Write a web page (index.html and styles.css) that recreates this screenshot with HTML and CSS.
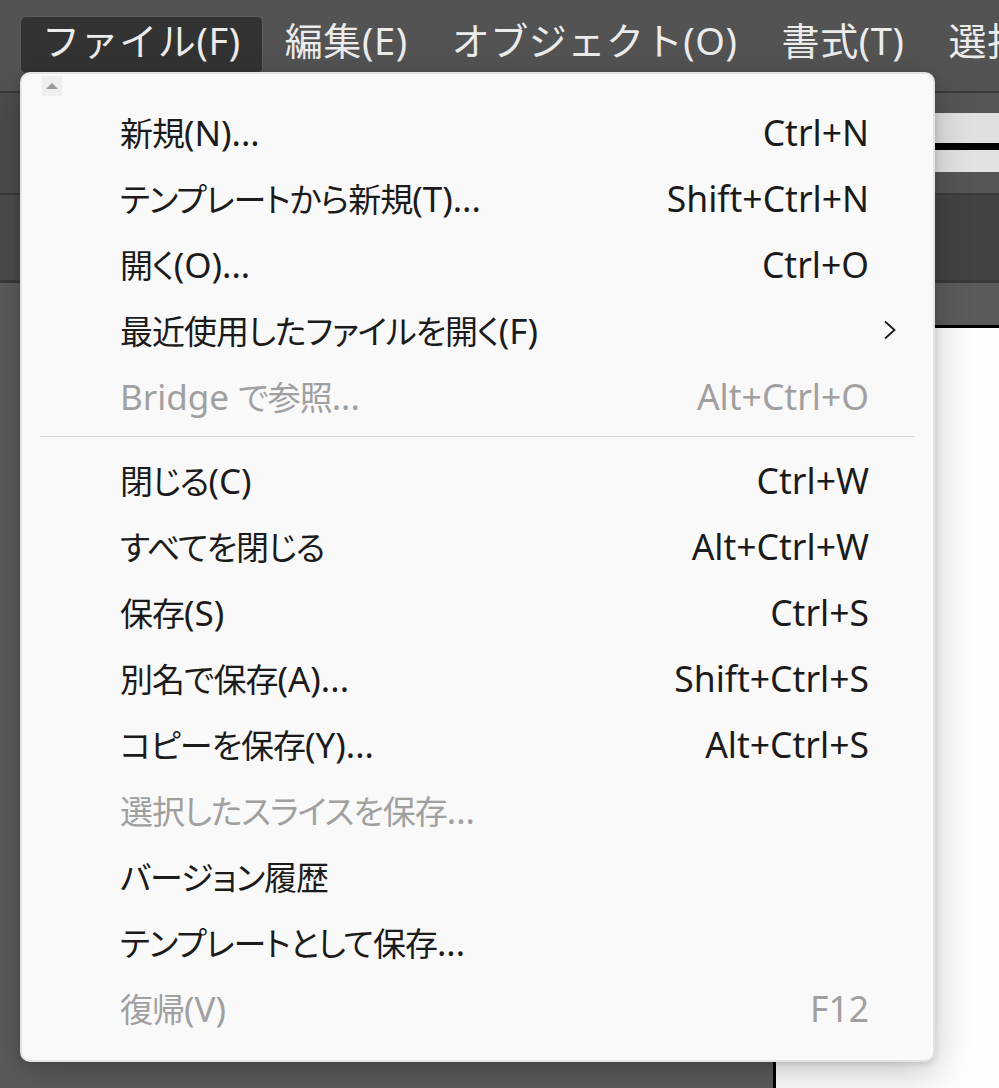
FILE: index.html
```html
<!DOCTYPE html>
<html lang="ja">
<head>
<meta charset="utf-8">
<title>ファイル メニュー</title>
<link rel="stylesheet" href="styles.css">
</head>
<body>
<div class="app">
  <header class="menubar">
    <span class="mb-item active">ファイル(F)</span>
    <span class="mb-item">編集(E)</span>
    <span class="mb-item">オブジェクト(O)</span>
    <span class="mb-item">書式(T)</span>
    <span class="mb-item">選択(S)</span>
  </header>
  <div class="controlbar">
    <div class="cb-left"></div>
    <div class="cb-widget">
      <div class="cb-field"></div>
      <div class="cb-rule"></div>
      <div class="cb-field2"></div>
    </div>
  </div>
  <div class="tabbar">
    <div class="tb-left"></div>
  </div>
  <div class="workspace">
    <div class="artboard"></div>
  </div>
</div>

<div class="menu">
  <div class="scroll-up"><span class="tri"></span></div>
  <ul class="items">
    <li class="item"><span class="label">新規<span class="lat">(N)...</span></span><span class="key">Ctrl+N</span></li>
    <li class="item"><span class="label">テンプレートから新規<span class="lat">(T)...</span></span><span class="key">Shift+Ctrl+N</span></li>
    <li class="item"><span class="label">開く<span class="lat">(O)...</span></span><span class="key">Ctrl+O</span></li>
    <li class="item"><span class="label">最近使用したファイルを開く<span class="lat">(F)</span></span><span class="key"></span>
      <svg class="sub" width="14" height="20" viewBox="0 0 14 20"><polyline points="2,1.5 11.5,10 2,18.5" fill="none" stroke="#1b1b1b" stroke-width="1.8"/></svg>
    </li>
    <li class="item disabled"><span class="label"><span class="lat">Bridge </span>で参照<span class="lat">...</span></span><span class="key">Alt+Ctrl+O</span></li>
    <li class="sep"></li>
    <li class="item"><span class="label">閉じる<span class="lat">(C)</span></span><span class="key">Ctrl+W</span></li>
    <li class="item"><span class="label">すべてを閉じる</span><span class="key">Alt+Ctrl+W</span></li>
    <li class="item"><span class="label">保存<span class="lat">(S)</span></span><span class="key">Ctrl+S</span></li>
    <li class="item"><span class="label">別名で保存<span class="lat">(A)...</span></span><span class="key">Shift+Ctrl+S</span></li>
    <li class="item"><span class="label">コピーを保存<span class="lat">(Y)...</span></span><span class="key">Alt+Ctrl+S</span></li>
    <li class="item disabled"><span class="label">選択したスライスを保存<span class="lat">...</span></span><span class="key"></span></li>
    <li class="item"><span class="label">バージョン履歴</span><span class="key"></span></li>
    <li class="item"><span class="label">テンプレートとして保存<span class="lat">...</span></span><span class="key"></span></li>
    <li class="item disabled"><span class="label">復帰<span class="lat">(V)</span></span><span class="key">F12</span></li>
  </ul>
</div>
</body>
</html>
```

FILE: styles.css
```css
* { box-sizing: border-box; }
html, body { margin: 0; padding: 0; }
body {
  width: 999px;
  height: 1088px;
  overflow: hidden;
  background: #5b5b5b;
  font-family: "Noto Sans", "Noto Sans CJK JP", sans-serif;
}
.app {
  display: flex;
  flex-direction: column;
  height: 1088px;
}
.menubar {
  height: 93px;
  background: #535353;
  border-bottom: 2px solid #3a3a3a;
  padding: 16px 0 0 20px;
  display: flex;
  align-items: flex-start;
  white-space: nowrap;
  overflow: hidden;
}
.mb-item {
  height: 58px;
  line-height: 46px;
  padding: 0 21px;
  font-size: 38px;
  letter-spacing: 0.6px;
  color: #ececec;
  border: 1px solid transparent;
  border-radius: 6px;
}
.mb-item.active {
  background: #333333;
  border-color: #5e5e5e;
}
.controlbar {
  height: 102px;
  background: #4d4d4d;
  border-bottom: 2px solid #3a3a3a;
  display: flex;
  justify-content: space-between;
}
.cb-widget {
  width: 140px;
  background: #555555;
  padding-top: 20px;
}
.cb-field { height: 30px; background: #e0e0e0; }
.cb-rule { height: 7px; background: #000; }
.cb-field2 { height: 22px; background: #e2e2e2; }
.tabbar {
  height: 88px;
  background: #434343;
  border-bottom: 3px solid #3a3a3a;
}
.tb-left { width: 60px; height: 100%; background: #4b4b4b; }
.workspace {
  flex: 1;
  display: flex;
  padding: 42px 0 0 773px;
  background: #5b5b5b;
}
.artboard {
  flex: 1;
  background: #fdfdfd;
  border-top: 3px solid #000;
  border-left: 3px solid #000;
}

/* Drop-down menu overlay */
.menu {
  position: absolute;
  left: 20px;
  top: 72px;
  width: 915px;
  height: 990px;
  background: #f9f9f9;
  border: 2px solid #e3e3e3;
  border-radius: 10px;
  box-shadow: 0 10px 36px rgba(0,0,0,0.22), 0 2px 6px rgba(0,0,0,0.12);
}
.scroll-up {
  width: 20px;
  height: 20px;
  margin: 2px 0 0 20px;
  background: #eeeeee;
  display: flex;
  align-items: center;
  justify-content: center;
}
.tri {
  width: 0;
  height: 0;
  border-left: 6px solid transparent;
  border-right: 6px solid transparent;
  border-bottom: 6px solid #999999;
}
.items {
  list-style: none;
  margin: 3px 0 0 0;
  padding: 0;
}
.item {
  height: 66px;
  display: grid;
  grid-template-columns: 1fr auto 64px;
  align-items: center;
  padding-left: 98px;
  color: #1b1b1b;
  white-space: nowrap;
}
.item.disabled { color: #a0a0a0; }
.label {
  font-size: 33px;
  letter-spacing: -1px;
  font-feature-settings: "palt" 1;
}
.lat {
  font-size: 35px;
  letter-spacing: 0;
}
.key {
  text-align: right;
  font-size: 35.5px;
}
.sub { justify-self: start; margin-left: 14px; }
.sep {
  height: 1px;
  margin: 7px 18px 10px 18px;
  background: #d6d6d6;
}
```
